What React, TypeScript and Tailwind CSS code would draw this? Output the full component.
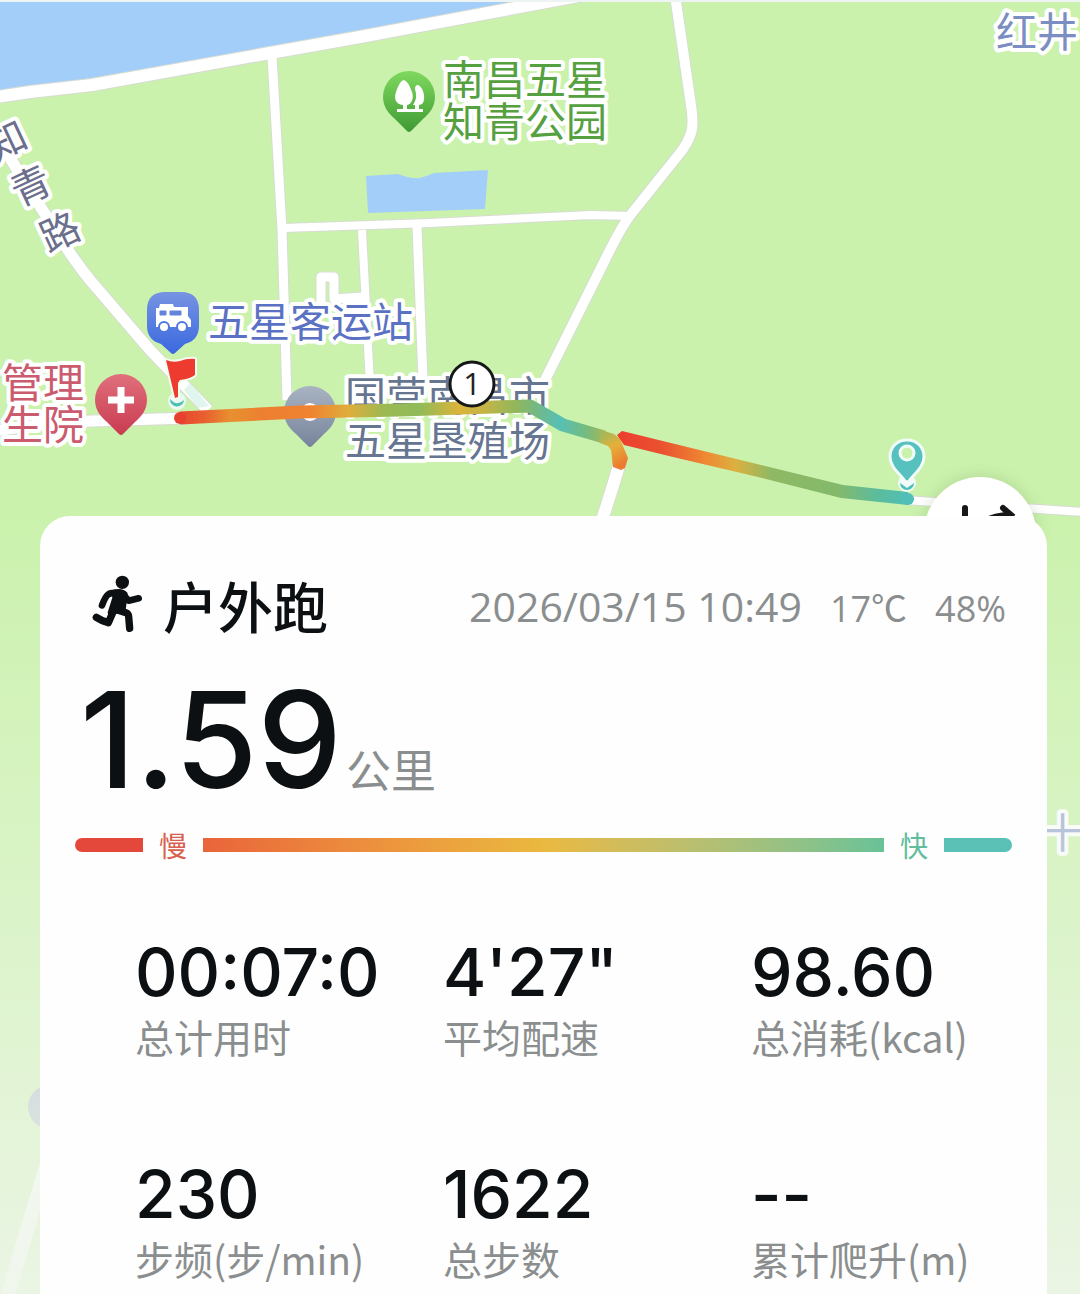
import React from "react";

const CJK = "font-['Noto_Sans_CJK_SC',sans-serif]";
const NUM = "font-['Open_Sans','Noto_Sans_CJK_SC',sans-serif]";
const FIGURES = "font-['Inter','Noto_Sans_CJK_SC',sans-serif]";

const ROADS: { d: string; w: number }[] = [
  { d: "M-10 98L30 92L92 85L270 53L360 37L600 -8", w: 12 },
  { d: "M272 56L282 230L287 400", w: 9 },
  { d: "M675 -5L691 105Q694 125 691 133Q688 143 680 153L632 213Q622 225 604 262L545 380", w: 10 },
  { d: "M283 228L430 223L590 215L632 216", w: 8 },
  { d: "M362 230L370 385", w: 8 },
  { d: "M417 226L423 380", w: 9 },
  { d: "M321 315V277H334V299L362 297", w: 9 },
  { d: "M5 150L50 222Q72 258 90 280L150 350L208 410", w: 11 },
  { d: "M-5 431L60 422L190 418", w: 11 },
  { d: "M620 462Q612 490 602 520", w: 12 },
  { d: "M905 500L1085 512", w: 8 },
];

const LABELS = [
  { x: 443, y: 95, t: "南昌五星", c: "#55a03f" },
  { x: 443, y: 137, t: "知青公园", c: "#55a03f" },
  { x: 208, y: 337, t: "五星客运站", c: "#5b72c4" },
  { x: 2, y: 398, t: "管理", c: "#cb5b6e" },
  { x: 2, y: 440, t: "生院", c: "#cb5b6e" },
  { x: 345, y: 411, t: "国营南昌市", c: "#667590" },
  { x: 345, y: 456, t: "五星垦殖场", c: "#667590" },
  { x: 996, y: 47, t: "红井", c: "#7b8ec2" },
  { x: 1042, y: 848, t: "十", c: "#9aa8d4" },
];

const ROAD_NAME = [
  { x: 7, y: 141, t: "知" },
  { x: 31, y: 186, t: "青" },
  { x: 60, y: 232, t: "路" },
];

const STATS = [
  { value: "00:07:0", label: "总计用时" },
  { value: "4'27\"", label: "平均配速" },
  { value: "98.60", label: "总消耗(kcal)" },
  { value: "230", label: "步频(步/min)" },
  { value: "1622", label: "总步数" },
  { value: "--", label: "累计爬升(m)" },
];

function Gradient({ id, from, to }: { id: string; from: string; to: string }) {
  return (
    <linearGradient id={id} x1="0" y1="0" x2="0" y2="1">
      <stop offset="0" stopColor={from} />
      <stop offset="1" stopColor={to} />
    </linearGradient>
  );
}

function RouteMap() {
  const pin = "M0 -26A26 26 0 0 1 26 0C26 10 20 17 14 22L2 34Q0 36 -2 34L-14 22C-20 17 -26 10 -26 0A26 26 0 0 1 0 -26Z";
  return (
    <svg
      viewBox="0 0 1080 1294"
      preserveAspectRatio="xMidYMin slice"
      className="absolute inset-0 h-full w-full"
      role="img"
      aria-label="跑步路线地图"
    >
      <defs>
        <Gradient id="park" from="#7fd95e" to="#3f9a35" />
        <Gradient id="bus" from="#7794e2" to="#3a68e0" />
        <Gradient id="med" from="#e0707c" to="#c93b50" />
        <Gradient id="place" from="#a9b3c2" to="#76849b" />
        <linearGradient id="out" gradientUnits="userSpaceOnUse" x1="174" y1="0" x2="612" y2="0">
          <stop offset="0" stopColor="#e8402f" />
          <stop offset="0.07" stopColor="#e8602f" />
          <stop offset="0.13" stopColor="#e8902f" />
          <stop offset="0.2" stopColor="#ec8030" />
          <stop offset="0.31" stopColor="#f08231" />
          <stop offset="0.4" stopColor="#dfae3c" />
          <stop offset="0.48" stopColor="#9cb953" />
          <stop offset="0.56" stopColor="#8fbb58" />
          <stop offset="0.65" stopColor="#dbb43c" />
          <stop offset="0.71" stopColor="#c4b447" />
          <stop offset="0.78" stopColor="#91b75a" />
          <stop offset="0.83" stopColor="#72b887" />
          <stop offset="0.88" stopColor="#56c0b4" />
          <stop offset="0.94" stopColor="#74bb80" />
          <stop offset="1" stopColor="#b6b64b" />
        </linearGradient>
        <linearGradient id="hook" gradientUnits="userSpaceOnUse" x1="603" y1="436" x2="621" y2="466">
          <stop offset="0" stopColor="#a9b755" />
          <stop offset="0.4" stopColor="#e5b03a" />
          <stop offset="1" stopColor="#ec7a30" />
        </linearGradient>
        <linearGradient id="back" gradientUnits="userSpaceOnUse" x1="618" y1="0" x2="912" y2="0">
          <stop offset="0" stopColor="#ec3d2f" />
          <stop offset="0.15" stopColor="#ea5230" />
          <stop offset="0.3" stopColor="#ee8a33" />
          <stop offset="0.4" stopColor="#dcb040" />
          <stop offset="0.52" stopColor="#8fb964" />
          <stop offset="0.75" stopColor="#83b96b" />
          <stop offset="0.88" stopColor="#5bbc9c" />
          <stop offset="1" stopColor="#4fbfb8" />
        </linearGradient>
      </defs>

      <rect width="1080" height="1294" fill="#cbf2ad" />
      <path d="M0 0H560L360 32L270 48L92 78L0 92Z" fill="#a4cefa" />
      <path d="M366 176L398 174Q410 179 420 178Q430 175 434 173L488 170L485 209L368 213Z" fill="#a4cefa" />
      {ROADS.map((r) => (
        <path key={r.d} d={r.d} fill="none" stroke="#d7dcd2" strokeWidth={r.w + 2} strokeLinejoin="round" />
      ))}
      {ROADS.map((r) => (
        <path key={r.d} d={r.d} fill="none" stroke="#fff" strokeWidth={r.w} strokeLinejoin="round" />
      ))}
      <rect width="1080" height="2" fill="#eef4f4" />
      <path d="M48 1160L8 1294" stroke="#fff" strokeWidth="14" />
      <circle cx="50" cy="1107" r="22" fill="#a9b0c8" />

      <g
        fontFamily="'Noto Sans CJK SC', sans-serif"
        fontSize="41"
        stroke="#fff"
        strokeWidth="8"
        strokeLinejoin="round"
        paintOrder="stroke"
      >
        {LABELS.map((l) => (
          <text key={l.t} x={l.x} y={l.y} fill={l.c}>
            {l.t}
          </text>
        ))}
        {ROAD_NAME.map((l) => (
          <text
            key={l.t}
            transform={`translate(${l.x} ${l.y}) rotate(-25)`}
            y="14"
            textAnchor="middle"
            fontSize="39"
            fill="#6b6f8c"
          >
            {l.t}
          </text>
        ))}
      </g>

      <g transform="translate(409 97)">
        <path d={pin} fill="url(#park)" />
        <path
          d="M9 -12C14 -10 17 0 14 6Q12 8 10 8V12H14V15H-12V12H-6V8C-14 7 -15 1 -13 -5Q-9 -17 -5 -17Q-1 -16 3 -5C5 1 3 7 -2 8V12H6V8H4Q9 1 6 -8Q6 -12 9 -12Z"
          fill="#fff"
        />
      </g>
      <g transform="translate(173 318)">
        <path
          d="M-8 -26H8Q26 -26 26 -8V8Q26 22 12 26L2 35Q0 37 -2 35L-12 26Q-26 22 -26 8V-8Q-26 -26 -8 -26Z"
          fill="url(#bus)"
        />
        <path d="M-17 -10H-14L-13 -14H0L1 -11H15V-2L18 2V9H-17Z" fill="#fff" />
        <path d="M-13 -7H-7V-3H-13ZM-3 -7H8V-3H-3Z" fill="#6484dc" stroke="#6484dc" strokeLinejoin="round" strokeWidth="1" />
        <circle cx="-9" cy="9" r="5" fill="#fff" stroke="#4f77e0" strokeWidth="2" />
        <circle cx="9" cy="9" r="5" fill="#fff" stroke="#4f77e0" strokeWidth="2" />
      </g>
      <g transform="translate(121 400)">
        <path d={pin} fill="url(#med)" />
        <path d="M-13 0H13M0 -13V13" stroke="#fff" strokeWidth="7" />
      </g>
      <g transform="translate(310 412)">
        <path d={pin} fill="url(#place)" />
        <circle r="9" fill="#fff" />
      </g>

      <path d="M180 418L300 412L400 410L530 406L563 425L604 437" fill="none" stroke="url(#out)" strokeWidth="13" strokeLinejoin="round" />
      <circle cx="180" cy="418" r="6" fill="#e8402f" />
      <path d="M601 430L614 434L620 439L628 458L625 468L621 470L613 467L611 450L608 446L600 443Z" fill="url(#hook)" />
      <path d="M622 431L675 444L761 465L843 485L908 492V505L841 498L758 477L673 457L624 445L617 435Z" fill="url(#back)" />
      <circle cx="908" cy="499" r="6" fill="#4fbfb8" />

      <path d="M184 390L190 383L209 406L198 408Z" fill="#dff5ee" />
      <circle cx="177" cy="401" r="9" fill="#eafaf3" />
      <path d="M170 399A7 7 0 1 0 184 400Q177 407 170 399Z" fill="#4fbfb0" />
      <path
        d="M166 360Q173 363 180 361Q188 358 195 359V375Q190 379 180 380L178 383L178 397L175 398Z"
        fill="#ee3b30"
        stroke="#f3fbef"
        strokeWidth="4"
        strokeLinejoin="round"
        paintOrder="stroke"
      />
      <circle cx="472" cy="384" r="22" fill="#fff" stroke="#151718" strokeWidth="3" />
      <text x="472" y="395" textAnchor="middle" fontFamily="'Open Sans', sans-serif" fontSize="31" fill="#222">
        1
      </text>

      <circle cx="907" cy="483" r="9" fill="#f1fcf8" />
      <path d="M900 483A7 7 0 0 0 914 483L907 488Z" fill="#4fbfb8" />
      <path
        d="M907 440C917 440 924 447 924 457C924 467 914 474 909 481Q907 483 905 481C900 474 890 467 890 457C890 447 897 440 907 440Z"
        fill="#56c1bf"
        stroke="#f1fcfa"
        strokeWidth="3"
      />
      <circle cx="907" cy="453" r="7" fill="#cbf2ad" stroke="#f1fcfa" strokeWidth="3" />
    </svg>
  );
}

function Runner() {
  return (
    <svg viewBox="0 0 165 180" className="h-[60px] w-[55px] shrink-0" aria-hidden="true">
      <g fill="none" stroke="#0c1012" strokeLinecap="round" strokeLinejoin="round">
        <circle cx="97" cy="25" r="20" fill="#0c1012" stroke="none" />
        <path d="M80 57Q62 56 54 62Q46 68 36 94" strokeWidth="20" />
        <path d="M100 62L116 80L146 73" strokeWidth="20" />
        <path d="M72 54Q96 48 106 60L100 108L60 116L74 72Z" fill="#0c1012" strokeWidth="14" />
        <path d="M82 108L108 116Q115 118 116 128L119 163" strokeWidth="22" />
        <path d="M70 112L55 146Q34 140 19 130" strokeWidth="22" />
      </g>
    </svg>
  );
}

export default function App() {
  return (
    <main className={`relative flex min-h-screen flex-col overflow-hidden ${CJK}`}>
      <RouteMap />
      <div className="absolute inset-x-0 top-[516px] bottom-0 bg-linear-to-b from-[#eef5ea]/0 to-[#eef5ea]/90" />

      <button
        type="button"
        aria-label="切换路线"
        className="absolute top-[477px] right-[44px] size-[112px] rounded-full bg-white shadow-[0_0_16px_rgba(60,100,40,0.2)]"
      >
        <svg viewBox="0 0 112 112" className="size-full" fill="none" stroke="#151718" strokeWidth="6" strokeLinecap="round" aria-hidden="true">
          <path d="M41 31V60M62 44Q70 38 86 38M79 31L87 38L79 46" />
        </svg>
      </button>

      <section className="relative mt-[516px] mr-[33px] ml-[40px] flex-1 rounded-t-[30px] bg-[#fefefe]">
        <header className="flex items-center justify-between pt-[52px] pr-[41px] pl-[50px]">
          <div className="flex items-center gap-[18px]">
            <Runner />
            <h1 className="text-[55px] leading-[60px] font-medium text-[#0c1012]">户外跑</h1>
          </div>
          <div className={`flex items-baseline gap-[28px] pt-2 text-[36px] leading-[60px] text-[#8b8e8e] ${NUM}`}>
            <time className="text-[41px]">2026/03/15 10:49</time>
            <span>17℃</span>
            <span>48%</span>
          </div>
        </header>

        <p className="flex items-baseline gap-[4px] pt-[12px] pl-[40px] text-[#0c1012]">
          <span className={`text-[134px] leading-[176px] font-medium ${FIGURES}`}>1.59</span>
          <span className="text-[45px] leading-[60px] text-[#8b8e8e]">公里</span>
        </p>

        <div className="flex items-center gap-[16px] pr-[35px] pl-[35px] text-[28px] leading-[36px]">
          <span className="h-[14px] w-[68px] rounded-l-full bg-[#e4483a]" />
          <span className="text-[#d9604e]">慢</span>
          <span className="h-[14px] flex-1 bg-linear-to-r from-[#e9643a] via-[#eab93f] to-[#68c297]" />
          <span className="text-[#62bd9d]">快</span>
          <span className="h-[14px] w-[68px] rounded-r-full bg-[#5bc1b6]" />
        </div>

        <dl className="grid grid-cols-[77fr_77fr_74fr] gap-y-[94px] pt-[72px] pb-[6px] pl-[95px]">
          {STATS.map((s) => (
            <div key={s.label} className="flex flex-col-reverse whitespace-nowrap">
              <dt className="text-[39px] leading-[54px] text-[#8b8e8e]">{s.label}</dt>
              <dd className={`text-[66px] leading-[74px] font-medium text-[#0c1012] ${FIGURES}`}>{s.value}</dd>
            </div>
          ))}
        </dl>
      </section>
    </main>
  );
}
